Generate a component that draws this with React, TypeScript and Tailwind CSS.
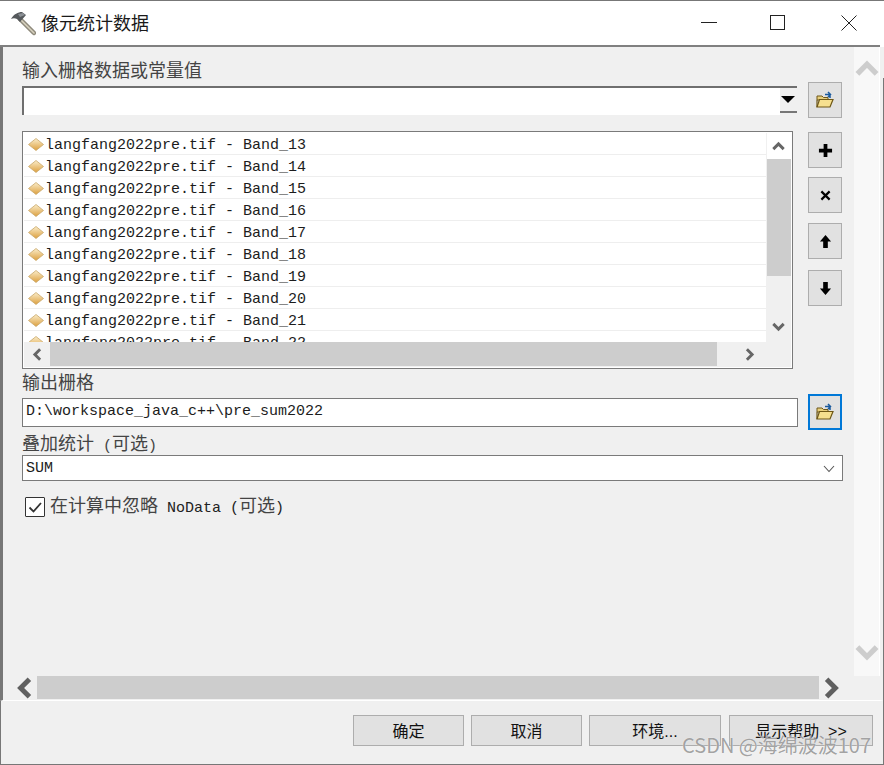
import type { ReactNode } from "react";

const BANDS = ["13", "14", "15", "16", "17", "18", "19", "20", "21", "22"];

const FONT = "font-['Liberation_Mono','Noto_Sans_CJK_SC',monospace]";

function Chevron({ dir, className }: { dir: "up" | "down" | "left" | "right"; className: string }) {
  const points = {
    up: "2,14 10,6 18,14",
    down: "2,6 10,14 18,6",
    left: "14,2 6,10 14,18",
    right: "6,2 14,10 6,18",
  }[dir];
  return (
    <svg viewBox="0 0 20 20" className={className}>
      <polyline points={points} fill="none" stroke="currentColor" strokeWidth="4.5" strokeLinecap="butt" />
    </svg>
  );
}

function Hammer() {
  return (
    <svg viewBox="0 0 26 26" className="h-[26px] w-[26px] shrink-0">
      <path d="M10 9 L24 23" stroke="#8f8a7c" strokeWidth="4.5" strokeLinecap="round" />
      <path d="M10 9 L24 23" stroke="#d8d2bf" strokeWidth="1.6" strokeLinecap="round" />
      <path d="M1 9 C4 4 8 2 12 2 L16 5 L10 12 L7 9 C5 8 3 8 1 9 Z" fill="#55595c" />
      <path d="M8 4 L13 3 L15 5 L10 7 Z" fill="#8b9095" />
    </svg>
  );
}

function Folder() {
  return (
    <svg viewBox="0 0 18 18" className="h-[18px] w-[18px]">
      <path d="M1 5 H6 L7.5 6.5 H12 V9 H1 Z" fill="#e8cf7c" stroke="#6e5716" strokeWidth="1" />
      <path d="M1 16 L3.5 8.5 H17 L14 16 Z" fill="#f6e08f" stroke="#6e5716" strokeWidth="1.2" />
      <path d="M1 9 V16" stroke="#6e5716" strokeWidth="1.2" />
      <path d="M9 3.5 H14 M12 1 L14.5 3.5 L12 6 M14 3.5 V7" fill="none" stroke="#1a5a9e" strokeWidth="1.5" />
    </svg>
  );
}

function Diamond({ id }: { id: string }) {
  return (
    <svg viewBox="0 0 16 13" className="mt-[2px] h-[13px] w-[16px] shrink-0">
      <defs>
        <linearGradient id={id} x1="0" y1="0" x2="0" y2="1">
          <stop offset="0" stopColor="#fbeecb" />
          <stop offset="1" stopColor="#dc9f3e" />
        </linearGradient>
      </defs>
      <path d="M8 0.5 L15.5 6.5 L8 12.5 L0.5 6.5 Z" fill={`url(#${id})`} stroke="#c9a76a" strokeWidth="0.8" />
    </svg>
  );
}

function SideButton({ children, className = "", focused = false }: { children: ReactNode; className?: string; focused?: boolean }) {
  const border = focused ? "border-2 border-[#0078d7]" : "border border-[#adadad]";
  return (
    <button className={`flex h-[36px] w-[34px] items-center justify-center bg-[#e1e1e1] ${border} ${className}`}>
      {children}
    </button>
  );
}

function FooterButton({ label, className }: { label: ReactNode; className: string }) {
  return (
    <button className={`h-[31px] whitespace-pre border border-[#adadad] bg-[#e1e1e1] pt-[2px] font-['Liberation_Sans','Noto_Sans_CJK_SC',sans-serif] text-[16px] text-[#111] ${className}`}>
      {label}
    </button>
  );
}

export default function App() {
  return (
    <div className={`relative flex h-[765px] w-[884px] flex-col overflow-hidden bg-[#f0f0f0] ${FONT}`}>
      {/* title bar */}
      <div className="h-[47px] shrink-0 border-t border-[#777] bg-white">
        <div className="mr-[4px] flex h-[46px] items-center border-b-2 border-[#808080] pl-[10px]">
          <Hammer />
          <span className="mb-[2px] ml-[5px] font-['Noto_Sans_CJK_SC',sans-serif] text-[18px] text-[#1a1a1a]">像元统计数据</span>
          <div className="ml-auto flex items-center pr-[23px]">
            <svg viewBox="0 0 16 16" className="h-[16px] w-[16px]"><path d="M0 7.5 H16" stroke="#222" /></svg>
            <svg viewBox="0 0 16 16" className="ml-[53px] h-[16px] w-[16px]"><rect x="0.5" y="0.5" width="14" height="14" fill="none" stroke="#222" /></svg>
            <svg viewBox="0 0 16 16" className="ml-[55px] h-[16px] w-[16px]"><path d="M0.5 0.5 L15.5 15.5 M15.5 0.5 L0.5 15.5" stroke="#222" /></svg>
          </div>
        </div>
      </div>

      {/* scrolling pane */}
      <div className="flex h-[654px] shrink-0 flex-col border-l-[3px] border-r-[4px] border-b border-[#777] border-r-[#f0f0f0] border-b-white">
        <div className="flex h-[629px] shrink-0">
          <div className="w-[851px] shrink-0 pl-[19px] pt-[14px]">
            <div className="h-[20px] text-[18px] leading-[22px] text-[#444]">输入栅格数据或常量值</div>

            <div className="mt-px flex items-start">
              <div className="mt-[4px] flex h-[29px] w-[775px] border-l-2 border-t-2 border-[#6f6f6f] bg-white">
                <div className="flex-1" />
                <div className="relative w-[17px] bg-[#f0f0f0]">
                  <div className="absolute left-0 top-[23px] h-[2px] w-full bg-[#777]" />
                  <div className="absolute left-[1px] top-[8px] h-0 w-0 border-x-[7px] border-t-[7px] border-x-transparent border-t-black" />
                </div>
              </div>
              <SideButton className="ml-[11px]"><Folder /></SideButton>
            </div>

            <div className="mt-[13px] flex items-start">
              <div className="h-[238px] w-[771px] border border-[#7a7a7a] bg-white p-px">
                <div className="grid h-[234px] grid-cols-[742px_25px] grid-rows-[209px_25px] bg-[#f0f0f0]">
                  <div className="overflow-hidden bg-white">
                    {BANDS.map((band) => (
                      <div key={band} className="flex h-[22px] items-center border-b border-[#eeeeee] pl-[4px] text-[15px] text-[#1c1c1c]">
                        <Diamond id={`d${band}`} />
                        <span className="ml-px whitespace-pre pt-[6px]">langfang2022pre.tif - Band_{band}</span>
                      </div>
                    ))}
                  </div>
                  <div className="flex flex-col items-center">
                    <div className="flex h-[26px] w-[24px] shrink-0 items-center justify-center bg-white">
                      <Chevron dir="up" className="h-[13px] w-[13px] text-[#666]" />
                    </div>
                    <div className="h-[117px] w-[24px] shrink-0 bg-[#cdcdcd]" />
                    <Chevron dir="down" className="mt-[44px] h-[13px] w-[13px] text-[#666]" />
                  </div>
                  <div className="col-span-2 flex items-center">
                    <div className="flex w-[26px] shrink-0 justify-center">
                      <Chevron dir="left" className="h-[13px] w-[13px] text-[#666]" />
                    </div>
                    <div className="h-[24px] w-[667px] shrink-0 self-start bg-[#cdcdcd]" />
                    <Chevron dir="right" className="ml-[26px] h-[13px] w-[13px] text-[#666]" />
                  </div>
                </div>
              </div>
              <div className="ml-[15px] mt-px flex flex-col">
                <SideButton>
                  <svg viewBox="0 0 16 16" className="h-[15px] w-[15px]"><path d="M8 1 V15 M1 8 H15" stroke="#000" strokeWidth="4" /></svg>
                </SideButton>
                <SideButton className="mt-[9px]">
                  <svg viewBox="0 0 12 12" className="h-[11px] w-[11px]"><path d="M1.5 1.5 L10.5 10.5 M10.5 1.5 L1.5 10.5" stroke="#000" strokeWidth="2.4" /></svg>
                </SideButton>
                <SideButton className="mt-[10px]">
                  <svg viewBox="0 0 14 16" className="h-[15px] w-[13px]"><path d="M7 1 L13 8 H9.5 V15 H4.5 V8 H1 Z" fill="#000" /></svg>
                </SideButton>
                <SideButton className="mt-[11px]">
                  <svg viewBox="0 0 14 16" className="h-[15px] w-[13px]"><path d="M7 15 L13 8 H9.5 V1 H4.5 V8 H1 Z" fill="#000" /></svg>
                </SideButton>
              </div>
            </div>

            <div className="mt-[4px] h-[20px] text-[18px] leading-[22px] text-[#444]">输出栅格</div>
            <div className="mt-px flex items-start">
              <div className="mt-[4px] flex h-[29px] w-[776px] items-center border border-[#7a7a7a] bg-white pl-[3px] text-[15px] text-[#1c1c1c]">
                D:\workspace_java_c++\pre_sum2022
              </div>
              <SideButton focused className="ml-[10px]"><Folder /></SideButton>
            </div>

            <div className="mt-[4px] h-[20px] whitespace-pre text-[18px] leading-[22px] text-[#444]">
              叠加统计<span className="text-[15px]"> (</span>可选<span className="text-[15px]">)</span>
            </div>
            <div className="mt-px flex h-[26px] w-[821px] items-center justify-between border border-[#7a7a7a] bg-white pl-[3px] pr-[7px] pt-[2px] text-[15px] text-[#1c1c1c]">
              SUM
              <svg viewBox="0 0 12 8" className="h-[8px] w-[12px]"><path d="M1 1 L6 6.5 L11 1" fill="none" stroke="#555" strokeWidth="1.1" /></svg>
            </div>

            <div className="ml-[3px] mt-[16px] flex h-[20px] items-center">
              <div className="flex h-[20px] w-[20px] items-center justify-center rounded-[1px] border-[1.5px] border-[#333] bg-white">
                <svg viewBox="0 0 16 16" className="h-[16px] w-[16px]"><path d="M2.5 8.5 L6.5 12.5 L14 4" fill="none" stroke="#333" strokeWidth="1.8" /></svg>
              </div>
              <span className="ml-[5px] h-[20px] whitespace-pre text-[18px] leading-[20px] text-[#444]">
                在计算中忽略<span className="text-[15px] text-[#222]"> NoData (</span>可选<span className="text-[15px] text-[#222]">)</span>
              </span>
            </div>
          </div>

          {/* outer vertical scrollbar */}
          <div className="flex w-[26px] shrink-0 flex-col items-center justify-between border-r border-white bg-[#f8f8f8] pb-[12px] pt-[10px]">
            <Chevron dir="up" className="h-[24px] w-[24px] text-[#cdcdcd]" />
            <Chevron dir="down" className="h-[24px] w-[24px] text-[#cdcdcd]" />
          </div>
        </div>

        {/* outer horizontal scrollbar */}
        <div className="flex h-[24px] items-center">
          <div className="flex w-[34px] shrink-0 justify-end pr-[1px]">
            <Chevron dir="left" className="h-[22px] w-[22px] text-[#606060]" />
          </div>
          <div className="h-[23px] w-[782px] shrink-0 self-start bg-[#cdcdcd]" />
          <Chevron dir="right" className="ml-[1px] h-[22px] w-[22px] text-[#606060]" />
        </div>
      </div>

      {/* footer */}
      <div className="flex flex-1 items-start border-b border-l border-[#777] pl-[352px] pt-[14px]">
        <FooterButton label="确定" className="w-[111px]" />
        <FooterButton label="取消" className="ml-[7px] w-[111px]" />
        <FooterButton label="环境..." className="ml-[7px] w-[132px]" />
        <FooterButton label="显示帮助  >>" className="ml-[8px] w-[144px]" />
      </div>

      {/* window edge on the right */}
      <div className="absolute bottom-0 right-0 top-[78px] w-px bg-[#777]" />

      {/* watermark */}
      <div className="absolute left-[682px] top-[733px] font-['Noto_Sans_CJK_SC',sans-serif] text-[20px] leading-[24px] text-[#8a8a8a]/80 [text-shadow:0_0_1px_#ffffff]">
        CSDN @海绵波波107
      </div>
    </div>
  );
}
